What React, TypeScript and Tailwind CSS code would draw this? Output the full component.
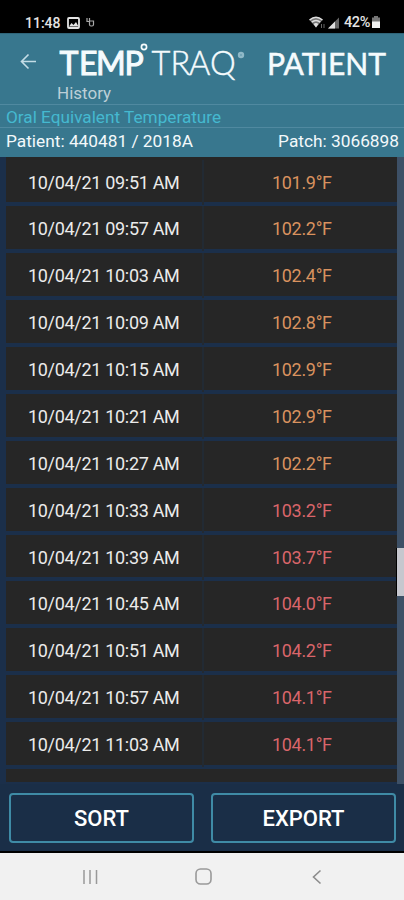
interface Reading {
  time: string;
  temp: string;
  level: 'elevated' | 'high';
}

const readings: Reading[] = [
  { time: '10/04/21 09:51 AM', temp: '101.9°F', level: 'elevated' },
  { time: '10/04/21 09:57 AM', temp: '102.2°F', level: 'elevated' },
  { time: '10/04/21 10:03 AM', temp: '102.4°F', level: 'elevated' },
  { time: '10/04/21 10:09 AM', temp: '102.8°F', level: 'elevated' },
  { time: '10/04/21 10:15 AM', temp: '102.9°F', level: 'elevated' },
  { time: '10/04/21 10:21 AM', temp: '102.9°F', level: 'elevated' },
  { time: '10/04/21 10:27 AM', temp: '102.2°F', level: 'elevated' },
  { time: '10/04/21 10:33 AM', temp: '103.2°F', level: 'high' },
  { time: '10/04/21 10:39 AM', temp: '103.7°F', level: 'high' },
  { time: '10/04/21 10:45 AM', temp: '104.0°F', level: 'high' },
  { time: '10/04/21 10:51 AM', temp: '104.2°F', level: 'high' },
  { time: '10/04/21 10:57 AM', temp: '104.1°F', level: 'high' },
  { time: '10/04/21 11:03 AM', temp: '104.1°F', level: 'high' },
];

const levelClass = {
  elevated: 'text-[#d9925f]',
  high: 'text-[#d9656a]',
};

function StatusBar() {
  return (
    <div className="flex h-[33px] shrink-0 items-end justify-between bg-black pr-[23px] pb-[2px] pl-[25px] text-[#e4e4e4]">
      <div className="flex items-center">
        <span className="w-[42px] text-[14px] leading-[16px] font-medium">11:48</span>
        <svg width="13" height="12" viewBox="0 0 13 12">
          <rect x="1" y="1" width="11" height="10" rx="1" fill="none" stroke="#e4e4e4" strokeWidth="1.8" />
          <path d="M2 9.5 4.5 6l2 2L9 5l2.5 4.5z" fill="#e4e4e4" />
        </svg>
        <svg className="mb-[2px] ml-[6px]" width="9" height="10" viewBox="0 0 9 10" fill="none" stroke="#a8a8a8" strokeWidth="1.2">
          <path d="M1 1v3.5h2M3.5 1v6.5a1.5 1.5 0 0 0 1.5 1.5h1a1.5 1.5 0 0 0 1.5-1.5V4H3.5" />
        </svg>
      </div>
      <div className="flex items-center">
        <svg width="17" height="13" viewBox="0 0 17 13">
          <path d="M0.5 4Q7 -1.5 13.5 4L7 11.5z" fill="#777" />
          <path d="M0.5 4Q7 -1.5 13.5 4M2.7 6.2Q7 2.7 11.3 6.2" fill="none" stroke="#dedede" strokeWidth="1.5" />
          <path d="M4.6 8Q7 6 9.4 8L7 11.5z" fill="#dedede" />
          <path d="M12.5 8v4M15 8v4" stroke="#666" />
        </svg>
        <svg className="ml-[2px]" width="12" height="12" viewBox="0 0 12 12">
          <path d="M0 11.5 11 0.5v11z" fill="#666" />
          <path d="M0 11.5 7 4.5v7z" fill="#dedede" />
        </svg>
        <span className="ml-[4px] pt-[1px] text-[14.5px] leading-[16px] font-medium tracking-[-0.4px]">42%</span>
        <svg className="ml-[1px]" width="10" height="13" viewBox="0 0 10 13">
          <path d="M3 0h4v1.5h2V6H1V1.5h2z" fill="#777" />
          <path d="M1 5.5h8V12H1z" fill="#f2f2f2" />
        </svg>
      </div>
    </div>
  );
}

function Logo() {
  return (
    <svg className="ml-[22px]" width="188" height="42" viewBox="0 0 188 42" fill="#f5fbfd" fontFamily="Lato, sans-serif">
      <text x="0.5 20 37 65.5" y="34.3" fontSize="32" fontWeight="400" stroke="#f5fbfd" strokeWidth="1">TEMP</text>
      <circle cx="85" cy="6" r="2.6" fill="none" stroke="#f5fbfd" strokeWidth="1.7" />
      <text x="92.5 111.5 130 151" y="34.3" fontSize="32.5" fontWeight="300" stroke="#f5fbfd" strokeWidth="0.45">TRAQ</text>
      <circle cx="182" cy="14" r="3.2" fill="#8fb9c8" />
      <circle cx="182" cy="14" r="1" fill="#6ba0b3" />
    </svg>
  );
}

function Header() {
  return (
    <header className="shrink-0 bg-[#38778e]">
      <div className="h-[71px] border-t border-[#2f6579]">
        <div className="flex h-[49px] items-start pt-[7px] pl-[20px]">
          <svg className="mt-[12px]" width="17" height="17" viewBox="0 0 17 17" fill="none" stroke="#c4dde6" strokeWidth="1.6">
            <path d="M16 8.5H2M8.5 1.5l-7 7 7 7" />
          </svg>
          <Logo />
          <svg className="ml-[20px]" width="122" height="42" viewBox="0 0 122 42" fill="#f5fbfd" fontFamily="Lato, sans-serif">
            <text x="0" y="33.5" fontSize="31" fontWeight="400" stroke="#f5fbfd" strokeWidth="0.5" textLength="119" lengthAdjust="spacingAndGlyphs">PATIENT</text>
          </svg>
        </div>
        <div className="pl-[57px] text-[17px] leading-[20px] text-[#bccfd7]">History</div>
      </div>
      <div className="h-[23px] border-t border-[#5089a0] pl-[6px] text-[17.2px] leading-[25px] text-[#45b9d0]">
        Oral Equivalent Temperature
      </div>
      <div className="flex h-[30px] justify-between border-t border-[#5089a0] pr-[5px] pl-[6px] text-[17.3px] leading-[26px] text-[#f3f9fb]">
        <span>Patient: 440481 / 2018A</span>
        <span>Patch: 3066898</span>
      </div>
    </header>
  );
}

function History() {
  return (
    <div className="flex h-[627px] shrink-0 bg-[#1b2f4a]">
      <div className="flex-1 overflow-hidden pl-[6px]">
        <div className="h-[2.5px] bg-[#262626]" />
        {readings.map((reading) => (
          <div key={reading.time} className="h-[46.88px] pb-[4px]">
            <div className="grid h-full grid-cols-[198px_1fr] bg-[#262626] text-[18px] leading-[45px] tracking-[-0.31px]">
              <span className="border-r-2 border-[#222a33] pl-[22px] text-[#ebebeb]">{reading.time}</span>
              <span className={`pl-[68px] ${levelClass[reading.level]}`}>{reading.temp}</span>
            </div>
          </div>
        ))}
        <div className="h-[13px] bg-[#262626]" />
      </div>
      <div className="w-[7px] bg-[#3d5066] pt-[391px]">
        <div className="relative left-[-1px] h-[48px] w-[8px] border-l border-black bg-[#c6c7ce]" />
      </div>
    </div>
  );
}

function ActionButton({ label }: { label: string }) {
  return (
    <button className="h-[50px] w-[185px] rounded-[4px] border-2 border-[#3f8ba6] bg-[#1a2e47] text-[22px] font-medium text-white">
      {label}
    </button>
  );
}

function NavBar() {
  return (
    <nav className="flex h-[47px] shrink-0 items-center bg-[#f1f1f1] pl-[82px]">
      <svg width="17" height="16" viewBox="0 0 17 16" stroke="#999" strokeWidth="1.5">
        <path d="M2 1v14M8 1v14M14.5 1v14" />
      </svg>
      <svg className="ml-[96px]" width="17" height="17" viewBox="0 0 17 17" fill="none" stroke="#999" strokeWidth="1.6">
        <rect x="1" y="1" width="15" height="15" rx="4.5" />
      </svg>
      <svg className="ml-[100px]" width="10" height="16" viewBox="0 0 10 16" fill="none" stroke="#8c8c8c" strokeWidth="1.6">
        <path d="M8.5 1.5 1.5 8l7 6.5" />
      </svg>
    </nav>
  );
}

export default function App() {
  return (
    <div className="flex h-[900px] w-[404px] flex-col overflow-hidden bg-[#1a2e47] font-['Roboto',sans-serif]">
      <StatusBar />
      <Header />
      <History />
      <div className="flex h-[69px] shrink-0 justify-between border-b-2 border-black pt-[9px] pr-[8px] pl-[9px]">
        <ActionButton label="SORT" />
        <ActionButton label="EXPORT" />
      </div>
      <NavBar />
    </div>
  );
}
